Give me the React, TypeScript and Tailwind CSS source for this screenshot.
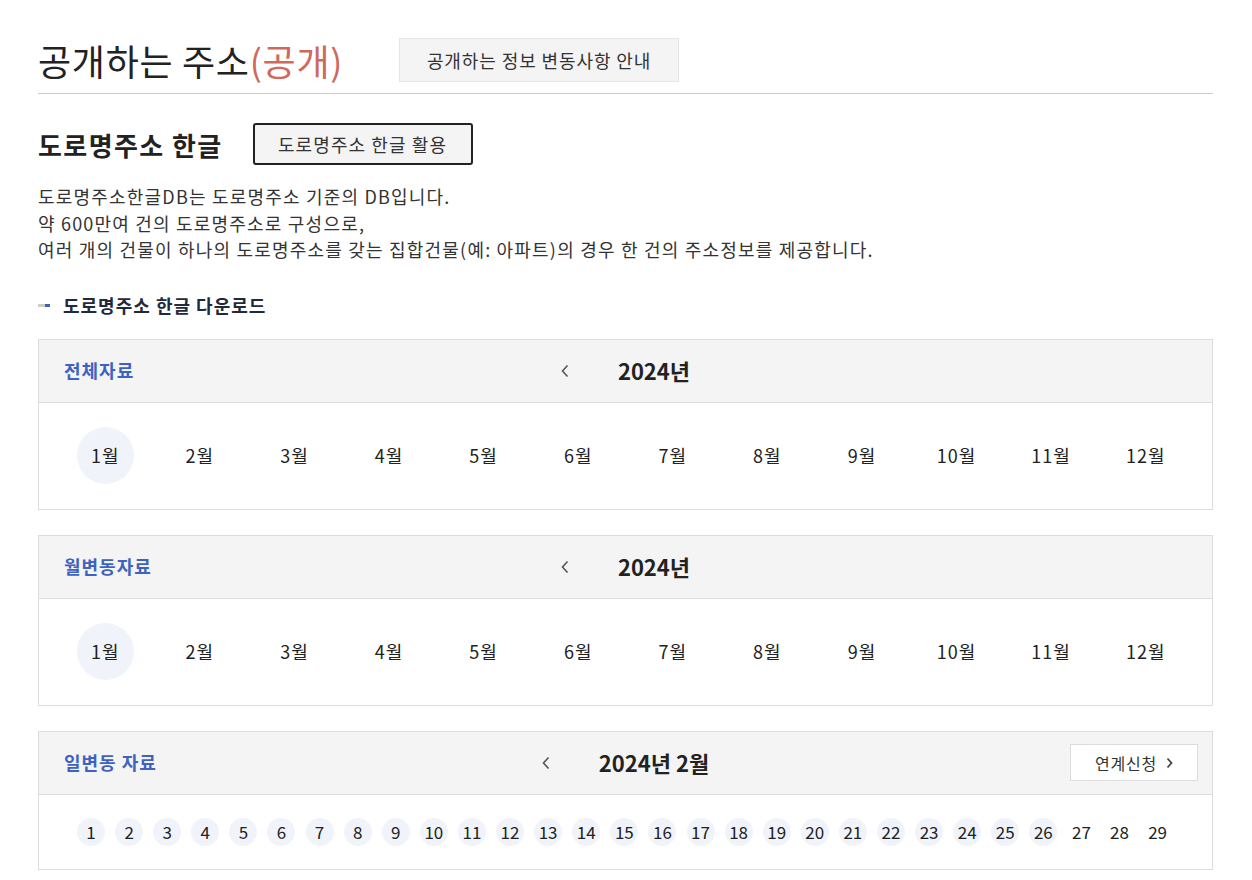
const months = Array.from({ length: 12 }, (_, i) => i + 1);
const days = Array.from({ length: 29 }, (_, i) => i + 1);

const ChevronLeft = () => (
  <svg width="8" height="14" viewBox="0 0 8 14" fill="none">
    <polyline points="6.5,1.5 1.5,7 6.5,12.5" stroke="#555" strokeWidth="1.6" />
  </svg>
);

const ChevronRight = () => (
  <svg width="7" height="12" viewBox="0 0 7 12" fill="none">
    <polyline points="1.5,1.5 5.5,6 1.5,10.5" stroke="#444" strokeWidth="1.8" />
  </svg>
);

const BoxHeader = ({ label, title, right }: { label: string; title: string; right?: React.ReactNode }) => (
  <div className="grid grid-cols-[1fr_auto_1fr] items-center h-[63px] bg-[#f4f4f4] border-b border-[#dddddd] px-[14px]">
    <div className="ml-[11px] text-[18px] font-bold text-[#3d62c2] tracking-[1px]">{label}</div>
    <div className="flex items-center gap-[49px]">
      <ChevronLeft />
      <span className="text-[22px] font-bold text-[#222]">{title}</span>
    </div>
    <div className="flex justify-end">{right}</div>
  </div>
);

const MonthBox = ({ label }: { label: string }) => (
  <div className="border border-[#dddddd]">
    <BoxHeader label={label} title="2024년" />
    <div className="grid grid-cols-12 h-[106px] items-center px-[19px]">
      {months.map((m) => (
        <div key={m} className="flex justify-center">
          <span
            className={
              m === 1
                ? "w-[57px] h-[57px] rounded-full bg-[#f0f4fa] flex items-center justify-center text-[18px] text-[#222] tracking-[1px]"
                : "w-[57px] h-[57px] flex items-center justify-center text-[18px] text-[#222] tracking-[1px]"
            }
          >
            {m}월
          </span>
        </div>
      ))}
    </div>
  </div>
);

const App = () => {
  return (
    <div className="min-h-screen bg-white px-[38px] pt-[38px] font-['Noto_Sans_CJK_KR','Noto_Sans',sans-serif] text-[#333]">
      {/* 제목 */}
      <div className="flex items-center pb-[11px] border-b border-[#cccccc] mr-[1px]">
        <h1 className="text-[36px] leading-[44px] text-[#222] tracking-[0.7px]">
          공개하는 주소<span className="text-[#d0685c]">(공개)</span>
        </h1>
        <button className="ml-[56px] w-[280px] h-[44px] bg-[#f4f4f4] border border-[#e5e5e5] text-[18px] text-[#333] tracking-[0.9px]">
          공개하는 정보 변동사항 안내
        </button>
      </div>

      {/* 도로명주소 한글 */}
      <div className="flex items-center mt-[29px]">
        <h2 className="text-[26px] font-bold text-[#222] tracking-[1.4px]">도로명주소 한글</h2>
        <button className="ml-[30px] w-[220px] h-[42px] bg-[#f4f4f4] border-2 border-[#222] rounded-[3px] text-[18px] text-[#333] tracking-[1.1px]">
          도로명주소 한글 활용
        </button>
      </div>

      <p className="mt-[18px] text-[18px] leading-[26.5px] text-[#333] tracking-[1.2px]">
        도로명주소한글DB는 도로명주소 기준의 DB입니다.
        <br />
        약 600만여 건의 도로명주소로 구성으로,
        <br />
        여러 개의 건물이 하나의 도로명주소를 갖는 집합건물(예: 아파트)의 경우 한 건의 주소정보를 제공합니다.
      </p>

      <div className="flex items-center mt-[31px] h-[24px]">
        <span className="w-[7px] h-[3px] bg-[#cccccc]" />
        <span className="w-[5px] h-[3px] bg-[#3d62c2]" />
        <h3 className="ml-[13px] text-[18px] font-bold text-[#1f2a3c] tracking-[1px]">도로명주소 한글 다운로드</h3>
      </div>

      <div className="mt-[21px] flex flex-col gap-[25px] mr-[1px]">
        <MonthBox label="전체자료" />
        <MonthBox label="월변동자료" />

        <div className="border border-[#dddddd]">
          <BoxHeader
            label="일변동 자료"
            title="2024년 2월"
            right={
              <button className="w-[128px] h-[37px] bg-white border border-[#dddddd] flex items-center justify-center gap-[9px] text-[16px] text-[#333] tracking-[0.8px]">
                연계신청
                <ChevronRight />
              </button>
            }
          />
          <div className="flex items-center h-[74px] px-[38px] gap-[10.1px]">
            {days.map((d) => (
              <span
                key={d}
                className={
                  d <= 26
                    ? "w-[28px] h-[28px] rounded-full bg-[#f0f4fa] flex items-center justify-center text-[17px] text-[#222]"
                    : "w-[28px] h-[28px] flex items-center justify-center text-[17px] text-[#222]"
                }
              >
                {d}
              </span>
            ))}
          </div>
        </div>
      </div>
    </div>
  );
};

export default App;
